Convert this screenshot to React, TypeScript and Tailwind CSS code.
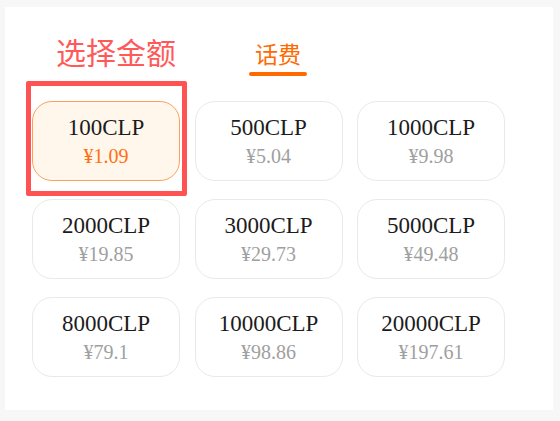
import React from 'react';

const amounts = [
  { label: '100CLP', price: '¥1.09' },
  { label: '500CLP', price: '¥5.04' },
  { label: '1000CLP', price: '¥9.98' },
  { label: '2000CLP', price: '¥19.85' },
  { label: '3000CLP', price: '¥29.73' },
  { label: '5000CLP', price: '¥49.48' },
  { label: '8000CLP', price: '¥79.1' },
  { label: '10000CLP', price: '¥98.86' },
  { label: '20000CLP', price: '¥197.61' },
];

export default function App() {
  const selected = 0;

  return (
    <div className="w-[560px] h-[421px] bg-[#f7f7f7] pt-[7px] pl-[5px]">
      <div className="relative w-[548px] h-[403px] bg-white pt-[29px]">
        <div className="flex items-start pl-[51px] font-['Noto_Sans_CJK_SC',sans-serif]">
          <span className="text-[30px] leading-[30px] text-[#ff5a5a]">选择金额</span>
          <div className="ml-[73px] mt-[6px] flex flex-col items-center">
            <span className="text-[23px] leading-[23px] text-[#ff6a00]">话费</span>
            <div className="mt-[7px] w-[58px] h-[4px] rounded-full bg-[#ff6a00]" />
          </div>
        </div>

        <div className="mt-[25px] ml-[27px] grid grid-cols-[repeat(3,148px)] gap-x-[14.5px] gap-y-[18px] font-['Liberation_Serif',serif]">
          {amounts.map((a, i) => (
            <div
              key={a.label}
              className={
                i === selected
                  ? 'h-[80px] rounded-[20px] border border-[#fba05c] bg-[#fff7ec] flex flex-col items-center justify-center'
                  : 'h-[80px] rounded-[20px] border border-[#e9e9e9] bg-white flex flex-col items-center justify-center'
              }
            >
              <span className="text-[23px] leading-[30px] text-[#1c1c1c]">{a.label}</span>
              <span
                className={
                  i === selected
                    ? 'text-[20px] leading-[26px] text-[#ff6f12]'
                    : 'text-[20px] leading-[26px] text-[#a0a0a0]'
                }
              >
                {a.price}
              </span>
            </div>
          ))}
        </div>

        <div className="absolute left-[21px] top-[74px] w-[161px] h-[115px] border-[5px] border-[#ff5252] rounded-[2px] pointer-events-none" />
      </div>
    </div>
  );
}
